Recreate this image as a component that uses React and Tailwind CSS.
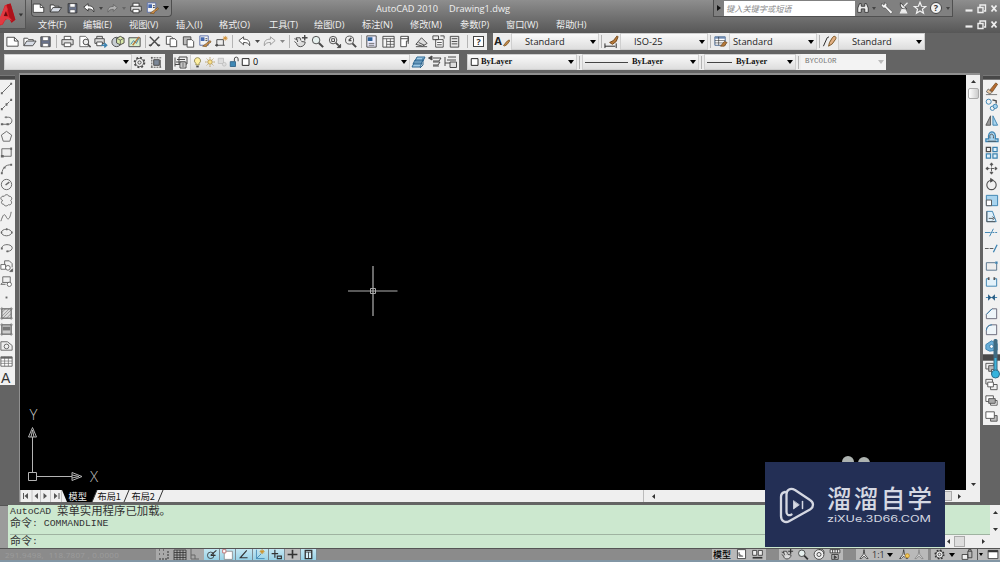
import React from 'react';

const UI = "font-['Open_Sans','Noto_Sans_CJK_SC',sans-serif]";
const MONO = "font-['Liberation_Mono','Noto_Sans_CJK_SC',monospace]";

const D = '#4a4a4a';
const B = '#3b82b0';
const L = '#a9d4ee';

// 16x16 drawings, stroke defaults to currentColor
const icons = {
    new: <><path d="M2 3.5h8l4 4v5.5H2z" fill="#fff" /><path d="M10 3.5v4h4" /></>,
    open: <><path d="M2 12.5v-8h4l1 1.5h5v2" fill="#fff" /><path d="M2 12.5l3-5h10l-3.5 5z" fill="#d8dde6" /></>,
    save: <><path d="M3 3h10v10.5H3z" fill="#69738c" /><path d="M5 3h6v4H5zM5 10h6v3.5H5z" fill="#fff" strokeWidth=".6" /></>,
    print: <><path d="M4.5 6V2.5h7V6" fill="#fff" /><path d="M2 6h12v5.5H2z" fill="#ddd" /><path d="M4.5 9.5h7v4h-7z" fill="#fff" /></>,
    preview: <><path d="M3 2.5h6l3 3v8H3z" fill="#fff" strokeWidth=".8" /><circle cx="9.5" cy="8.5" r="3" fill="#eee" /><path d="M11.5 11l3 3" strokeWidth="1.6" /></>,
    publish: <><path d="M4 5V2.5h6V5M2 5h10v5H2z" fill="#ddd" /><path d="M4 8.5h6v4H4z" fill="#fff" /><path d="M9 12h5M12 9.8l2.5 2.2-2.5 2.2" stroke={B} strokeWidth="1.6" /></>,
    globe: <><circle cx="7" cy="8.5" r="5" fill="#c7cdd2" /><path d="M7 4.5l4-2 4 2v5l-4 2-4-2z" fill="#d8e8a8" /><path d="M7 4.5l4 2 4-2M11 6.5v5" strokeWidth=".8" /></>,
    map: <><path d="M2 4h12v9.5H2z" fill="#d9eecb" /><path d="M4 11l3-4 3 3 3-6" stroke={B} /><path d="M6 12l7-9" stroke="#b97a3c" strokeWidth="1.5" /></>,
    cut: <><path d="M3 3l10 10M13 3L3 13" strokeWidth="1.5" /><path d="M2 12h3M11 12h3" strokeWidth="1.8" /></>,
    copy: <><path d="M2.5 2.5h5l2 2V11h-7z" fill="#fff" /><path d="M6.5 5h5l2 2v6.5h-7z" fill="#fff" /></>,
    paste: <><path d="M2.5 3h8v8.5h-8z" fill="#bbb" /><path d="M6.5 6h5l2 2v6h-7z" fill="#fff" /></>,
    match: <><path d="M3 2h9v10H3z" fill="#f4f4f4" stroke="#5b6ea8" /><path d="M4 3.5h4v4H4z" fill="#4468b0" stroke="none" /><path d="M9 5h2M9 7h2" /><path d="M6 13l4-3 4-3 1 1.5-4 3-1 2z" fill="#c98d4b" stroke="#76511f" strokeWidth=".7" /></>,
    block: <><path d="M3 6h7v6M3 6v6h-1.5h10" /><path d="M12 2v5M9.5 4.5h5M10 3l4 3M14 3l-4 3" stroke="#d08b2c" strokeWidth=".9" /><circle cx="3" cy="12" r="1" fill={D} /></>,
    undo: <path d="M2 7l5-4v2.5c5 0 7 2 6.5 7-1-2.5-3-3.5-6.5-3.5v2.5z" fill="#fff" />,
    redo: <path d="M14 7L9 3v2.5c-5 0-7 2-6.5 7 1-2.5 3-3.5 6.5-3.5v2.5z" fill="#eee" />,
    pan: <><path d="M1.5 5l3 1M5 8.5L3.5 4h4l1 3M4 10L1.5 8M4 10c0 2 1.5 3.5 4 3.5s5-2 5-5L9 8" fill="#ddd" /><path d="M12.5 1v6M9.5 4h6" strokeWidth="1.5" /></>,
    zoom: <><circle cx="6.5" cy="6.5" r="4" fill="#e6f0ee" /><path d="M9.5 9.5l4.5 4.5" strokeWidth="2.2" /></>,
    zoomWin: <><circle cx="6.5" cy="6.5" r="4" fill="#eee" /><path d="M5 5h3v3H5z" /><path d="M9.5 9.5l3 3" strokeWidth="1.8" /><path d="M14.5 11v3.5H11z" fill={D} /></>,
    zoomPrev: <><circle cx="7" cy="6.5" r="4.3" fill="#eee" /><path d="M10 10l4 4" strokeWidth="2" /><path d="M6 7l3-3M6 7h3" strokeWidth="1.4" /></>,
    props: <><path d="M3 2h10v12H3z" fill="#eef" /><path d="M4 3.5h5v4H4z" fill="#2f6297" stroke="none" /><path d="M5 10h6M5 12h6" strokeWidth=".8" /></>,
    design: <><path d="M2 2.5h12v11.5H2z" fill="#f5f5f5" /><path d="M2 5h12M6 5v9M6 8h8M6 11h8M10 5v9" strokeWidth=".8" /></>,
    palettes: <><path d="M4 2.5h8v5H10v6H4z" fill="#fff" /><path d="M4 5h8M12 2.5v8" /></>,
    sheet: <><path d="M2 11l6-7 6 6-5 3z" fill="#ddd" /><path d="M2 13.5h12M5 9l6 3" /></>,
    markup: <><path d="M5 6h8v8H5z" fill="#fff" /><path d="M2 2h6v4H2zM10 2h4v3M6.5 9h5M6.5 11.5h5" /></>,
    calc: <><path d="M3.5 2.5h9v11.5h-9z" fill="#e6e6e6" /><path d="M5 5h6M5 8h6M5 10.5h6" /></>,
    layers: <><path d="M6 3h8v7H6z" fill="#eee" /><path d="M4 5.5h8M3 8h9M2 10.5h6M2 3.5v9" /><path d="M7 8h6v6H7z" fill="#eee" /><path d="M8.5 10h3M8.5 12h3" /></>,
    bulb: <><path d="M8 2a3.8 3.8 0 0 1 2 7v2H6V9a3.8 3.8 0 0 1 2-7z" fill="#fff0a0" stroke="#867c43" /><path d="M6.5 13h3" strokeWidth="2" /></>,
    sun: <><circle cx="8" cy="8" r="3" fill="#fbe38c" stroke="#a6863c" /><path d="M8 1.5v2M8 12.5v2M1.5 8h2M12.5 8h2M3.5 3.5l1.3 1.3M11.2 11.2l1.3 1.3M12.5 3.5l-1.3 1.3M3.5 12.5l1.3-1.3" stroke="#a6863c" /></>,
    frozen: <g stroke="#bbb"><path d="M3 3h7v7H3z" fill="#ddd" /><circle cx="11" cy="11" r="2.5" fill="#ddd" /></g>,
    lock: <><path d="M3 7.5h7V14H3z" fill="#3f88b5" stroke="#23577c" /><path d="M8.5 7V4a2.5 2.5 0 0 1 5 0v3" strokeWidth="1.3" /></>,
    square: <path d="M3 3.5h9v9H3z" fill="#fff" stroke="#222" strokeWidth="1.3" />,
    stack: <><path d="M2 13l2-4h8l-2 4zM3 10l2-4h8l-2 4zM5 7l2-4h8l-2 4z" fill="#9fcbe8" stroke="#2e6790" /><path d="M13 4v7l-3 3" stroke="#2e6790" /></>,
    layerPrev: <><path d="M6 4h8l-2 3H6M6 8h7l-2 3H6M6 12h6" /><path d="M1.5 4L5 2v4z" fill={D} /></>,
    layerState: <><path d="M5 3h8M4 6h9M2 9h5M2 3v9" /><path d="M7 8h6.5v5.5H7z" fill="#ddd" /></>,
    gear: <><circle cx="8" cy="8" r="5.2" strokeDasharray="2 2.08" strokeWidth="2" /><circle cx="8" cy="8" r="4.4" fill="#eee" /><circle cx="8" cy="8" r="1.7" /></>,
    workspace: <><path d="M2 3h12M2 13h12M3 2v12" strokeDasharray="2 1" /><path d="M5 5h6v6H5z" fill="#7b8798" /><path d="M12 5v8" /></>,
    textStyle: <path d="M8 13l4-5 3-2 .5 1.5-3 4-3 2z" fill="#c98d4b" stroke="#76511f" />,
    dimStyle: <><path d="M1 13h11M1 10v5M13 10v5" /><path d="M6 9l4-2 4-5 1 1-2 5-4 3z" fill="#b77a3a" stroke="#704416" /></>,
    tableStyle: <><path d="M2 3h11v9H2z" fill="#fff" stroke="#49668f" /><path d="M2 4h11" strokeWidth="2" stroke="#6f8cb4" /><path d="M2 7h11M6 3v9M2 9.5h11" strokeWidth=".6" /><path d="M8 13l4-5 3 1-3 4z" fill="#b77a3a" stroke="#704416" strokeWidth=".7" /></>,
    leader: <><path d="M1.5 13l4-9 2-1" /><path d="M7 13l1-4 3-5c2-3 5-1 3.5 1.5l-3.5 5z" fill="#e2b083" stroke="#76511f" /></>,
    // draw toolbar
    line: <><path d="M3 13L13 3" /><path d="M2 13h2M12 3h2" strokeWidth="2.2" /></>,
    xline: <><path d="M3 13L13 3" strokeDasharray="5 1" /><path d="M2 13h2M7 8h2M12 3h2" strokeWidth="2.5" /></>,
    pline: <><path d="M6 4.5h4c5 0 5 7.5 0 7.5H3" /><path d="M2 12h2.5M8 12h2.5M7 4.5h1" strokeWidth="2" /></>,
    polygon: <path d="M8 2.5l5.5 4-2 6.5h-7l-2-6.5z" />,
    rect: <><path d="M3 4h10v8H3z" fill="#eee" /><path d="M2 12h3M12 4h2" strokeWidth="2.5" /></>,
    arc: <><path d="M3 13c1-6 4-9 10-9" /><path d="M2 13h2M5 7h2M12 4h2" strokeWidth="2" /></>,
    circle: <><circle cx="8" cy="8" r="5.5" /><path d="M7 8.5l4-3" strokeWidth="1.5" /></>,
    cloud: <path d="M4 8c-3.5-1-2-5.5 1.5-4.5C7 1 10 1.5 10.5 3.5c3-.5 4 3 2 4.5 2 2 .5 5.5-2.5 4.5-1.5 2-4.5 1.5-5-.5C2 12 2 9 4 8z" />,
    spline: <path d="M2 13c3-9 4-8 6-4s4 0 5-6" />,
    ellipse: <><ellipse cx="8" cy="8" rx="5.5" ry="3.5" /><path d="M7.5 4.5h1.5M2 8h1.5M13 8h1.5" strokeWidth="2.2" /></>,
    ellArc: <><path d="M3 8c0-6 12-5 11 0-1 3-4 3-6 3" /><path d="M2 8h2M8 11h2" strokeWidth="2" /></>,
    insert: <><path d="M6 9V3h5l3 3v4" /><path d="M2 7h5v5H2z" fill="#fff" /><circle cx="9.5" cy="10.5" r="2.5" fill="#fff" /><path d="M14.5 11.5v3h-3z" fill={D} /></>,
    makeBlock: <><path d="M4 3h8v6H4z" /><circle cx="11" cy="11" r="2.3" fill="#fff" /><path d="M4 9l-2 2h5" /></>,
    point: <path d="M7 8h2" strokeWidth="2" />,
    hatch: <><path d="M3 3h10v10H3z" fill="#ddd" /><path d="M3 7l4-4M3 11l8-8M4 13l9-9M8 13l5-5M1 3h14M1 13h14M3 1v14M13 1v14" strokeWidth=".6" /></>,
    gradient: <><path d="M3 3h10v10H3z" fill="#ccc" /><path d="M4 5h8v4H4z" fill="#777" stroke="none" /><path d="M1 3h14M1 13h14M3 1v14M13 1v14" strokeWidth=".6" /></>,
    region: <><path d="M2 13V4h7l5 4v5z" fill="#eee" /><circle cx="8" cy="9" r="2.5" /></>,
    table: <><path d="M2 3h12v10H2z" fill="#fff" /><path d="M2 4h12" strokeWidth="2" /><path d="M2 7.5h12M2 10h12M6 3v10M10 3v10" strokeWidth=".7" /></>,
    // modify toolbar
    erase: <><path d="M6 10l6.5-8 2 1.500-5.500 8z" fill="#b56a2f" stroke="#704416" strokeWidth=".8" /><path d="M4.500 8.500l4 3.500-2 2-4-2.500z" fill="#e9c9a5" strokeWidth=".8" /><path d="M2 14.500h12" strokeWidth=".8" /></>,
    dup: <g stroke={B}><circle cx="5" cy="5" r="2.7" /><circle cx="9" cy="12" r="2.3" /><circle cx="12" cy="10" r="2.3" fill={L} /><path d="M9 3l4 1v3" stroke={D} strokeWidth="1.4" /></g>,
    mirror: <><path d="M7 3v10H2z" fill="#999" /><path d="M9.5 3v10h5z" fill={L} stroke={B} /></>,
    offset: <><path d="M2 13.5h13v-3h-3c2-10-9-10-7 0H2z" fill={L} stroke={B} strokeWidth="1.3" /><path d="M4 13h9M6.5 10c-2-6 5-6 3.5 0" /></>,
    array: <g stroke={B} strokeWidth="1.3"><path d="M2.5 2.5h4.5V7H2.5z" stroke={D} /><path d="M9.5 2.5H14V7H9.5zM2.5 9.5h4.5V14H2.5zM9.5 9.5H14V14H9.5z" fill="#dff0fa" /></g>,
    move: <><path d="M8 2v12M2 8h12" strokeDasharray="4 1" /><path d="M6.5 4L8 2l1.5 2zM6.5 12L8 14l1.5-2zM4 6.5L2 8l2 1.5zM12 6.5L14 8l-2 1.5z" fill={D} /></>,
    rotate: <><circle cx="8" cy="8.5" r="5" strokeWidth="1.2" /><path d="M7 1.5l3 2-3 2z" fill={D} /></>,
    scale: <><path d="M2.5 2.5h12v11h-12z" fill={L} stroke={B} /><path d="M2.5 7.5H8v6H2.5z" fill="#fff" /></>,
    stretch: <><path d="M3 2.5h6l4 11H3z" fill="#dff0fa" stroke={B} /><path d="M3 2.5v11h9M5 10h5M9 8l2 2-2 2" /></>,
    trim: <><path d="M1 8h6" stroke={B} /><path d="M9 8h6" stroke={B} strokeDasharray="2 1" /><path d="M6 12l4-8" stroke={B} /></>,
    extend: <><path d="M1 8h9" strokeDasharray="4 1" /><path d="M10 12l4-8" stroke={B} strokeWidth="1.3" /></>,
    breakPt: <><path d="M12 5H2.5v8h11V6" stroke="#55718a" fill="#eee" /><path d="M12 5h2.5" strokeWidth="2.5" stroke={B} /></>,
    break: <><path d="M5 5H2.5v8h11V5H11" stroke={B} fill="#e3f2fb" /><path d="M5 3.5v3M11 3.5v3" strokeWidth="1.8" /></>,
    join: <><path d="M2 8h12" stroke={B} /><path d="M5 6l2 2-2 2zM11 6L9 8l2 2z" strokeWidth="1.3" stroke="#2c5f85" fill="#2c5f85" /></>,
    chamfer: <><path d="M2.5 13.5V9l6-6h5v10.5z" fill="#eef5f9" stroke="#667" /><path d="M2.5 9l6-6" stroke={B} /></>,
    fillet: <><path d="M2.5 13.5V9c0-4 3-6 6-6h5v10.5z" fill="#eef5f9" stroke="#667" /><path d="M2.5 9c0-4 3-6 6-6" stroke={B} /></>,
    explode: <><path d="M2 7l6-4 6 3v7l-8 1-4-2z" fill="#68aed8" stroke={B} /><circle cx="8" cy="9" r="2" fill="#fff" stroke={B} /></>,
    order1: <><path d="M2 2.5h8v6H2z" fill="#eee" /><path d="M5 5h7v6H5z" fill="#bbb" /><path d="M8 9h6v5H8z" fill="#fff" /></>,
    order2: <><path d="M2 2.5h7v5H2z" fill="#eee" /><path d="M7 8h7v5.5H7z" fill="#eee" /><path d="M4 5.5h6v5H4z" fill="#fff" /></>,
    order3: <><path d="M2 3h8v6H2z" fill="#fff" /><path d="M7 8h7v5H7z" fill="#fff" /><path d="M5 6h7v5H5z" fill="#aaa" /></>,
    order4: <><path d="M7 7h7v6H7z" fill="#bbb" /><path d="M2 3h9v7H2z" fill="#fff" /></>,
    // title bar
    binoc: <path d="M2 13V8l2-5h2v3h4V3h2l2 5v5h-4V9H6v4z" fill="#eee" stroke="#333" />,
    wrench: <path d="M2 2.5l2 2 1.5-1L5 1.5l3 2-.5 2.5 7 6.5-2 2.5-6.5-7H3.500l-2-3z" fill="#f4f4f4" stroke="#444" strokeWidth=".7" />,
    dish: <><path d="M4 2c-1 5 2 8 7 7z" fill="#eee" stroke="#333" /><path d="M8 6l4-4M6 9l-2 4.5h7l-2-4" stroke="#eee" fill="#eee" strokeWidth="1.3" /></>,
    star: <path d="M8 1.5l1.8 4.5 4.7.3-3.7 3 1.2 4.7L8 11.5 4 14l1.2-4.7-3.7-3 4.7-.3z" fill="#777" stroke="#f4f4f4" strokeWidth="1.4" />,
    // status bar
    snap: <path d="M3 3h1M7 3h1M3 7h1M7 7h1M3 12h9V3" strokeDasharray="2 1" />,
    grid: <path d="M2 3h12v10H2zM2 5.5h12M2 8h12M2 10.5h12M5 3v10M8 3v10M11 3v10" strokeWidth=".8" />,
    ortho: <path d="M3 2v10h8M3 8h4v4" stroke="#666" />,
    polar: <><circle cx="7" cy="9" r="4" /><path d="M7 9l7-6M7 9h6" strokeWidth="1.4" /></>,
    osnap: <><path d="M4 4h10v10H4z" fill="#fff" stroke="#888" /><path d="M2 2h4v4H2z" fill="#fff" stroke="#b66" /></>,
    otrack: <path d="M12 3L4 12h9" strokeWidth="1.4" />,
    ducs: <><path d="M3 2v11h10M3 13l6-6" stroke={B} /><path d="M10 1.5v6M7 4.5h6M8 2.5l4 4M12 2.5l-4 4" stroke="#cf9327" strokeWidth="1.2" /></>,
    dyn: <path d="M6 2v10M2 7h8M9 10h5v3H9z" strokeWidth="1.4" />,
    lwt: <path d="M2 8h6M8 2v11M8 8h6" strokeWidth="2" />,
    qp: <><path d="M4 3h8v10H4z" fill="#d5eef8" strokeWidth="1.6" /><path d="M8 5v8M4 5h8" /></>,
    paper: <><path d="M3 2h10v11H3z" fill="#fff" /><path d="M5 5v5h5M5 7l3 3" /></>,
    views: <><path d="M2 3h5v6H2zM9 3h5v6H9z" fill="#eee" /><path d="M2 12h12" strokeWidth="2" /></>,
    wheel: <><circle cx="8" cy="8" r="6" fill="#eee" /><circle cx="8" cy="8" r="2.5" /><path d="M8 2c4-2 7 1 6 5" /></>,
    motion: <><path d="M2 2h12v4H2z" fill="#eee" /><path d="M5 2v4M8 2v4M11 2v4M4 8h8v6H4z" /><path d="M7 9.5l3 2-3 1.5z" fill={D} /></>,
    anno: <path d="M8 2L7 8l-4 5h2l3-3 3 3h2L9 8z" fill="#eee" />,
    annoSun: <><path d="M7 2L6 8l-4 5h2l3-3 3 3h2L8 8z" fill="#eee" /><circle cx="11.5" cy="9.5" r="2.5" fill="#f1ca5a" stroke="#bb8523" /></>,
    toolLock: <><path d="M2 8h7v6H2z" fill="#eee" /><path d="M9 4h5v8H9zM10 4V2h3v2" /></>,
    clean: <><path d="M2 3h12v10H2z" fill="#fff" /><path d="M2 4h12" strokeWidth="2.5" /></>,
};

function Icon({ name, className = 'size-[15px]' }) {
    return (
        <svg viewBox="0 0 16 16" className={`shrink-0 ${className}`} fill="none" stroke="currentColor" strokeWidth="1">
            {icons[name]}
        </svg>
    );
}

function Caret({ className = 'h-[4px] w-[6px] text-black' }) {
    return (
        <svg viewBox="0 0 8 5" preserveAspectRatio="none" className={`shrink-0 ${className}`}>
            <path d="M0 0h8L4 5z" fill="currentColor" />
        </svg>
    );
}

// Row of toolbar buttons on the 16.7px grid
function Group({ names, className = '' }) {
    return (
        <div className={`flex h-full shrink-0 items-center ${className}`}>
            {names.map(n => (
                <div key={n} className="flex w-[16.7px] shrink-0 justify-center">
                    <Icon name={n} />
                </div>
            ))}
        </div>
    );
}

const Sep = ({ className = '' }) => <div className={`h-[13px] w-px shrink-0 bg-[#b4b4b4] ${className}`} />;

function Combo({ children, className = '' }) {
    return (
        <div className={`flex h-full shrink-0 items-center border border-[#cfcfcf] bg-linear-to-b from-[#fafafa] to-[#dedede] pr-[2px] ${className}`}>
            {children}
        </div>
    );
}

const menus = [
    ['文件(F)', 'w-[45px]'],
    ['编辑(E)', 'w-[46px]'],
    ['视图(V)', 'w-[47px]'],
    ['插入(I)', 'w-[43px]'],
    ['格式(O)', 'w-[50px]'],
    ['工具(T)', 'w-[45px]'],
    ['绘图(D)', 'w-[48px]'],
    ['标注(N)', 'w-[48px]'],
    ['修改(M)', 'w-[50px]'],
    ['参数(P)', 'w-[46px]'],
    ['窗口(W)', 'w-[50px]'],
    ['帮助(H)', 'w-[40px]'],
];

function WindowButtons() {
    return (
        <svg viewBox="0 0 34 12" className="h-[12px] w-[34px] shrink-0" fill="none" stroke="#eee" strokeWidth="1.6">
            <path d="M1.5 7.5h7" strokeWidth="2.2" />
            <path d="M14 4.5h5v5H14zM16 4V2h5.5v6H20" strokeWidth="1.4" />
            <path d="M27.5 2.5l5 6M32.5 2.5l-5 6" strokeWidth="1.8" />
        </svg>
    );
}

function Header() {
    return (
        <header className="flex h-[33px] shrink-0 bg-linear-to-b from-[#8e8e8e] to-[#575757] text-[#f0f0f0]">
            <div className="flex h-[29px] w-[26px] shrink-0 items-center border-r border-b border-[#555] bg-linear-to-b from-[#8c8c8c] to-[#767676]">
                <svg viewBox="0 0 26 29" className="h-[29px] w-[26px]">
                    <path d="M0 19L5 5l6-2 5 17-4 3-3-5-4 3-2 4-3 1z" fill="#d92127" />
                    <path d="M7 4l4-1 5 17-4 3-2-4z" fill="#ac121b" />
                    <path d="M0 17L6 5l2 4-4 7 6 2 3 3-7-2-4 6H0z" fill="#e03a42" />
                    <path d="M4 16l2-5 2 5z" fill="#6d0a10" />
                    <path d="M19.5 13.5h4.5l-2.25 3z" fill="#333" />
                </svg>
            </div>
            <div className="flex min-w-0 grow flex-col">
                <div className="flex h-[17px] items-center">
                    <div className="ml-[5px] flex h-[17px] w-[141px] shrink-0 items-center rounded-b-sm border border-t-0 border-[#4e4e4e] bg-[#858585] text-[#333]">
                        <Icon name="new" className="-ml-[2px] h-[14px] w-[17px]" />
                        <Icon name="open" className="h-[14px] w-[17px]" />
                        <Icon name="save" className="h-[14px] w-[17px]" />
                        <Icon name="undo" className="h-[14px] w-[16px]" />
                        <Caret className="mx-[2px] h-[3px] w-[4px] text-[#444]" />
                        <Icon name="redo" className="h-[13px] w-[15px] opacity-40" />
                        <Caret className="mx-[2px] h-[3px] w-[4px] text-[#666]" />
                        <Icon name="print" className="h-[14px] w-[16px]" />
                        <Icon name="match" className="h-[15px] w-[16px]" />
                        <Caret className="ml-[3px] h-[4px] w-[6px] text-black" />
                    </div>
                    <div className={`ml-[204px] w-[337px] shrink-0 text-[9.2px] whitespace-pre ${UI}`}>
                        <span className="inline-block w-[73px]">AutoCAD 2010</span>
                        <span>Drawing1.dwg</span>
                    </div>
                    <div className="flex h-[17px] w-[240px] shrink-0 items-center border border-t-0 border-[#505050] bg-[#808080]">
                        <svg viewBox="0 0 10 14" className="h-[14px] w-[10px]"><path d="M3 4l4 3-4 3z" fill="#111" /></svg>
                        <div className="flex h-[15px] w-[131px] shrink-0 items-center bg-white pl-[2px] text-[8.2px] text-[#888] italic font-['Noto_Sans_CJK_SC',sans-serif]">键入关键字或短语</div>
                        <Icon name="binoc" className="ml-px size-[14px]" />
                        <Caret className="ml-[2px] h-[3px] w-[4px] text-[#444]" />
                        <Icon name="wrench" className="ml-[4px] size-[14px]" />
                        <Icon name="dish" className="ml-[3px] size-[14px]" />
                        <Icon name="star" className="ml-[2px] size-[14px]" />
                        <div className={`ml-[3px] flex size-[12px] items-center justify-center rounded-full border border-[#444] bg-[#f2f2f2] text-[9px] font-bold text-[#333] ${UI}`}>?</div>
                        <Caret className="ml-[4px] h-[3px] w-[4px] text-[#444]" />
                    </div>
                    <div className="ml-auto pr-[2px]"><WindowButtons /></div>
                </div>
                <div className={`flex h-[16px] items-center pl-[12px] text-[9.2px] leading-none ${UI}`}>
                    {menus.map(([label, width]) => (
                        <span key={label} className={`shrink-0 whitespace-nowrap ${width}`}>{label}</span>
                    ))}
                    <div className="ml-auto pr-[2px]"><WindowButtons /></div>
                </div>
            </div>
        </header>
    );
}

function StandardToolbar() {
    return (
        <div className={`flex h-[17px] shrink-0 pl-[4px] text-[9.3px] text-[#222] ${UI}`}>
            <div className="flex h-full w-[483px] shrink-0 items-center bg-[#ededed] text-[#4a4a4a]">
                <Group names={['new', 'open', 'save']} />
                <Sep className="ml-[2px]" />
                <Group names={['print', 'preview', 'publish', 'globe', 'map']} className="ml-[2px]" />
                <Sep className="ml-[2px]" />
                <Group names={['cut', 'copy', 'paste', 'match', 'block']} className="ml-px" />
                <Sep className="ml-[2px]" />
                <Group names={['undo']} className="ml-[3px]" />
                <Caret className="mx-[2px] h-[3px] w-[5px]" />
                <Group names={['redo']} className="opacity-50" />
                <Caret className="mx-[2px] h-[3px] w-[5px] text-[#888]" />
                <Sep className="ml-[2px]" />
                <Group names={['pan', 'zoom', 'zoomWin', 'zoomPrev']} className="ml-[2px]" />
                <Sep className="ml-[2px]" />
                <Group names={['props', 'design', 'palettes', 'sheet', 'markup', 'calc']} className="ml-px" />
                <Sep className="ml-[4px]" />
                <div className="ml-[5px] flex size-[11px] items-center justify-center border border-[#444] bg-white text-[9px] leading-none font-bold text-[#333]">?</div>
            </div>
            <div className="ml-[6px] flex h-full w-[432px] shrink-0 items-center bg-[#ededed]">
                <div className="flex w-[18px] items-center justify-center">
                    <span className="text-[11px] font-bold">A</span>
                    <Icon name="textStyle" className="-ml-[5px] size-[13px]" />
                </div>
                <Combo className="w-[88px] pl-[13px]"><span className="grow">Standard</span><Caret /></Combo>
                <div className="flex w-[21px] items-center justify-center gap-[2px]"><Sep /><Icon name="dimStyle" /></div>
                <Combo className="w-[88px] pl-[13px]"><span className="grow">ISO-25</span><Caret /></Combo>
                <div className="flex w-[21px] items-center justify-center gap-[2px]"><Sep /><Icon name="tableStyle" /></div>
                <Combo className="w-[88px] pl-[3px]"><span className="grow">Standard</span><Caret /></Combo>
                <div className="flex w-[21px] items-center justify-center gap-[2px]"><Sep /><Icon name="leader" /></div>
                <Combo className="w-[87px] pl-[13px]"><span className="grow">Standard</span><Caret /></Combo>
            </div>
        </div>
    );
}

const serif = "font-['Liberation_Serif',serif] text-[8.4px] font-bold text-[#111]";

function LayerToolbar() {
    return (
        <div className="mt-[4px] flex h-[16px] shrink-0 pl-[4px] text-[#4a4a4a]">
            <div className="flex h-full w-[161px] shrink-0 items-center bg-[#ededed]">
                <Combo className="w-[128px] justify-end"><Caret /></Combo>
                <Icon name="gear" />
                <Icon name="workspace" className="ml-[2px] size-[15px]" />
            </div>
            <div className="ml-[8px] flex h-full w-[286px] shrink-0 items-center bg-[#ededed]">
                <Icon name="layers" className="size-[16px]" />
                <Combo className="ml-px w-[220px]">
                    <Icon name="bulb" className="size-[13px]" />
                    <Icon name="sun" className="size-[12px]" />
                    <Icon name="frozen" className="size-[12px]" />
                    <Icon name="lock" className="size-[12px]" />
                    <Icon name="square" className="size-[12px]" />
                    <span className={`grow pl-px text-[9px] text-black ${UI}`}>0</span>
                    <Caret />
                </Combo>
                <Icon name="stack" className="size-[16px]" />
                <Icon name="layerPrev" className="ml-px size-[16px]" />
                <Icon name="layerState" className="size-[16px]" />
            </div>
            <div className="ml-[8px] flex h-full w-[419px] shrink-0 items-center bg-[#ededed]">
                <Combo className="w-[110px] pl-px">
                    <Icon name="square" className="size-[12px]" />
                    <span className={`grow ${serif}`}>ByLayer</span>
                    <Caret />
                </Combo>
                <Sep className="mx-[2px]" />
                <Combo className="w-[117px] pl-[2px]">
                    <div className="h-px w-[43px] bg-[#444]" />
                    <span className={`grow pl-[4px] ${serif}`}>ByLayer</span>
                    <Caret />
                </Combo>
                <Sep className="mx-[2px]" />
                <Combo className="w-[92px] pl-[2px]">
                    <div className="h-px w-[25px] bg-[#444]" />
                    <span className={`grow pl-[4px] ${serif}`}>ByLayer</span>
                    <Caret />
                </Combo>
                <Sep className="mx-[2px]" />
                <div className="flex h-full w-[85px] items-center bg-[#f3f3f3] pr-[2px] pl-[4px]">
                    <span className="grow text-[7.5px] text-[#777] font-['Liberation_Mono',monospace]">BYCOLOR</span>
                    <Caret className="h-[4px] w-[6px] text-[#bbb]" />
                </div>
            </div>
        </div>
    );
}

const drawTools = ['line', 'xline', 'pline', 'polygon', 'rect', 'arc', 'circle', 'cloud', 'spline', 'ellipse', 'ellArc', 'insert', 'makeBlock', 'point', 'hatch', 'gradient', 'region', 'table'];
const modifyTools = ['erase', 'dup', 'mirror', 'offset', 'array', 'move', 'rotate', 'scale', 'stretch', 'trim', 'extend', 'breakPt', 'break', 'join', 'chamfer', 'fillet', 'explode'];
const orderTools = ['order1', 'order2', 'order3', 'order4'];

function SideTools({ names }) {
    return names.map(n => (
        <div key={n} className="flex h-[16.1px] w-full shrink-0 items-center justify-center">
            <Icon name={n} />
        </div>
    ));
}

const Grip = ({ className = 'h-[5px]' }) => <div className={`shrink-0 border-y border-[#777] bg-[#484848] ${className}`} />;

function Canvas() {
    return (
        <div className="flex h-[415px]">
            <svg viewBox="20 75 946 415" className="h-[415px] w-[946px] shrink-0 bg-black" fill="none" stroke="#b4b4b4" strokeWidth="1">
                <path d="M348 291h49.5M373 266v50" stroke="#b0b0b0" strokeWidth="1.2" />
                <path d="M370.5 288.5h5v5h-5z" stroke="#aaa" />
                <path d="M28.5 472.5h8v8h-8zM32.5 472v-35M36.5 476.5H72" />
                <path d="M28.5 437l4-9.5 4 9.5zM31 437l1.5-7 1.5 7M72 472.5l10 4-10 4zM72 475l7 1.5-7 1.5" />
                <circle cx="848" cy="462" r="6" fill="#adb3b0" stroke="none" />
                <circle cx="864" cy="463" r="6" fill="#adb3b0" stroke="none" />
                <g fill="#c0c0c0" stroke="none" fontFamily="Open Sans, sans-serif" fontWeight="300" fontSize="15">
                    <text x="29.5" y="420">Y</text>
                    <text x="90" y="482">X</text>
                </g>
            </svg>
            <div className="flex w-[14px] flex-col items-center justify-between bg-[#efefef] pt-[5px] pb-[4px]">
                <div className="flex flex-col items-center gap-[5px]">
                    <Caret className="h-[3px] w-[5px] rotate-180 text-[#333]" />
                    <div className="h-[11px] w-[11px] rounded-xs border border-[#aaa] bg-linear-to-r from-white to-[#ccc]" />
                </div>
                <Caret className="h-[3px] w-[5px] text-[#333]" />
            </div>
        </div>
    );
}

function LayoutTabs() {
    return (
        <div className="flex h-[12px] bg-[#efefef]">
            <svg viewBox="0 0 146 12" className="h-[12px] w-[146px] shrink-0" fill="none" stroke="#999">
                <path d="M.5 0v12M12 0v12M20.5 0v12M30.5 0v12M41.5 0v12" stroke="#c4c4c4" />
                <path d="M3.5 3v6M39 3v6" stroke="#555" />
                <path d="M8 3v6L4.5 6zM18 3v6l-3.5-3zM23.5 3v6l3.5-3zM34 3v6l3.5-3z" fill="#555" stroke="none" />
                <path d="M42 0h35l-5 12H47z" fill="#000" stroke="none" />
                <path d="M77 0l-5 12M109 0l-5 12M143 0l-5 12" stroke="#333" />
                <g fontFamily="Noto Sans CJK SC, sans-serif" fontSize="9.2" stroke="none" fill="#111">
                    <text x="48.5" y="9.5" fill="#eee">模型</text>
                    <text x="77.5" y="9.5">布局1</text>
                    <text x="111.5" y="9.5">布局2</text>
                </g>
            </svg>
            <div className="ml-[477px] flex grow items-center border-l border-[#bbb] pl-[7px]">
                <Caret className="h-[3px] w-[5px] rotate-90 text-[#333]" />
                <div className="ml-[274px] h-[10px] w-[22px] border border-[#aaa] bg-[#ddd]" />
                <Caret className="ml-[5px] h-[3px] w-[5px] -rotate-90 text-[#333]" />
            </div>
        </div>
    );
}

function CommandLine() {
    return (
        <div className="mt-[3px] flex h-[43px] shrink-0 text-[#333]">
            <div className="w-[8px] shrink-0 border-t border-[#555] bg-[#9b9b9b]" />
            <div className={`flex w-[982px] shrink-0 flex-col bg-[#cce8cf] pt-px pl-[2px] text-[9.8px] ${MONO}`}>
                <div className="flex h-[12px] items-center whitespace-pre">AutoCAD <span className="pt-px text-[11.4px] leading-none">菜单实用程序已加载。</span></div>
                <div className="flex h-[12px] items-center whitespace-pre"><span className="text-[11px] leading-none">命令</span>: COMMANDLINE</div>
                <div className="mt-[4px] flex h-[14px] items-center border-t border-[#9fb3a1]">
                    <div className="flex grow items-center pt-[2px]"><span className="text-[11px] leading-none">命令</span>:</div>
                    <div className="flex h-full w-[45px] items-center bg-[#efefef] pl-px">
                        <Caret className="h-[3px] w-[5px] rotate-90 text-[#333]" />
                        <div className="ml-[3px] h-[11px] w-[11px] border border-[#aaa] bg-[#ddd]" />
                        <Caret className="ml-[16px] h-[3px] w-[5px] -rotate-90 text-[#333]" />
                    </div>
                </div>
            </div>
            <div className="flex grow flex-col items-center justify-between bg-[#efefef] pt-[6px] pb-[17px]">
                <Caret className="h-[3px] w-[5px] rotate-180 text-[#333]" />
                <Caret className="h-[3px] w-[5px] text-[#333]" />
            </div>
        </div>
    );
}

const toggles = ['polar', 'osnap', 'otrack', 'ducs', 'dyn', 'lwt', 'qp'];

function StatusBar() {
    return (
        <div className="flex h-[14px] shrink-0 items-center overflow-hidden border-t border-b-2 border-t-[#555] border-b-[#8296a5] bg-[#8b8b8b] text-[#333]">
            <div className={`w-[156px] shrink-0 pl-[5px] text-[8px] tracking-[0.3px] whitespace-pre text-[#9c9c9c] ${UI}`}>291.9498,  118.7807 , 0.0000</div>
            <div className="flex w-[48px] shrink-0 bg-[#a9a9a9]">
                <Icon name="snap" className="size-[16px]" />
                <Icon name="grid" className="size-[16px]" />
                <Icon name="ortho" className="size-[16px]" />
            </div>
            <div className="flex shrink-0">
                {toggles.map(n => (
                    <div key={n} className={`w-[16.2px] border-r border-[#7d8b92] ${n === 'lwt' ? 'bg-[#bdbdbd]' : 'bg-linear-to-b from-[#c9e9f3] to-[#92d0e6]'}`}>
                        <Icon name={n} className="h-[13px] w-[15px]" />
                    </div>
                ))}
            </div>
            <div className="ml-auto flex h-full items-center">
                <div className="flex h-full w-[54px] items-center bg-[#b9b9b9] pl-px">
                    <span className="w-[21px] text-[9px] leading-none font-['Noto_Sans_CJK_SC',sans-serif] font-medium text-black">模型</span>
                    <Icon name="paper" className="h-[13px] w-[15px]" />
                    <Icon name="views" className="ml-px h-[13px] w-[15px]" />
                </div>
                <div className="ml-[13px] flex h-full w-[64px] items-center bg-[#b9b9b9]">
                    <Icon name="pan" className="h-[13px] w-[16px]" />
                    <Icon name="zoom" className="h-[13px] w-[16px]" />
                    <Icon name="wheel" className="h-[13px] w-[16px]" />
                    <Icon name="motion" className="h-[13px] w-[16px]" />
                </div>
                <div className="ml-[13px] flex h-full w-[72px] items-center bg-[#b9b9b9]">
                    <Icon name="anno" className="h-[13px] w-[16px]" />
                    <span className={`w-[15px] text-[9px] leading-none ${UI}`}>1:1</span>
                    <Caret />
                    <Icon name="annoSun" className="ml-[4px] h-[13px] w-[15px]" />
                    <Icon name="anno" className="h-[13px] w-[14px] opacity-40" />
                </div>
                <div className="ml-[3px] flex h-full w-[69px] items-center bg-[#b9b9b9]">
                    <Icon name="gear" className="h-[13px] w-[17px]" />
                    <Caret className="ml-px h-[4px] w-[6px] text-black" />
                    <Icon name="toolLock" className="ml-[5px] h-[13px] w-[14px]" />
                    <div className="ml-[3px] h-full w-px bg-[#555]" />
                    <Caret className="ml-px h-[3px] w-[4px] text-black" />
                    <Icon name="clean" className="ml-[3px] h-[13px] w-[14px]" />
                </div>
            </div>
        </div>
    );
}

function Watermark() {
    return (
        <div className="absolute top-[462px] left-[765px] flex h-[85px] w-[180px] items-center bg-[#232f55] pl-[14px] text-[#d5d8e2]">
            <svg viewBox="0 0 36 38" className="h-[38px] w-[36px] shrink-0" fill="none" stroke="currentColor" strokeWidth="2.3" strokeLinejoin="round" strokeLinecap="round">
                <path d="M6 6c-2.5.5-4 2-4 5v19c0 5 4 7.5 8.5 5l20.5-11.5c4-2.5 4-7 0-9.5L16 4C11.5 1.5 7.5 3.5 7.5 8.5v17.5c0 3 2.5 4 5 2.500" />
                <path d="M14.5 15v8l5.5-4z" fill="currentColor" strokeWidth=".8" />
                <path d="M23.5 15.5v7" strokeWidth="1.5" />
            </svg>
            <svg viewBox="0 0 106 42" className="ml-[12px] h-[42px] w-[106px] shrink-0" fill="currentColor">
                <text x="0" y="24" textLength="105" fontFamily="Noto Sans CJK SC, sans-serif" fontWeight="500" fontSize="24.500">溜溜自学</text>
                <text x="0" y="38" textLength="104" lengthAdjust="spacingAndGlyphs" fontFamily="Inter, sans-serif" fontSize="9">ziXUe.3D66.COM</text>
            </svg>
        </div>
    );
}

export default function App() {
    return (
        <div className="relative flex h-[562px] w-[1000px] flex-col overflow-hidden bg-[#646464]">
            <Header />
            <StandardToolbar />
            <LayerToolbar />
            <div className="mt-[3px] flex h-[429px] shrink-0">
                <div className="flex w-[15px] shrink-0 flex-col items-center pt-[2px] text-[#666]">
                    <div className="w-full"><Grip /></div>
                    <div className="flex h-[305px] w-full flex-col bg-[#f1f1f1] pr-[3px]">
                        <SideTools names={drawTools} />
                        <div className="pl-px text-[14px] leading-[16px] text-[#333] font-['Liberation_Sans',sans-serif]">A</div>
                    </div>
                </div>
                <div className="ml-[4px] w-[961px] shrink-0 border-t-2 border-l border-[#909090]">
                    <Canvas />
                    <LayoutTabs />
                </div>
                <div className="ml-[3px] flex w-[17px] shrink-0 flex-col pt-[2px] text-[#555]">
                    <Grip />
                    <div className="bg-[#f1f1f1]"><SideTools names={modifyTools} /></div>
                    <Grip className="h-[7px]" />
                    <div className="bg-[#f1f1f1]"><SideTools names={orderTools} /></div>
                </div>
            </div>
            <CommandLine />
            <StatusBar />
            <svg viewBox="0 0 10 42" className="absolute top-[338px] left-[990px] h-[42px] w-[10px]">
                <path d="M3.5 2.5c0-2 4-2 4 0V32h-4z" fill="#3e6b82" />
                <path d="M4.5 20h2v14h-2z" fill="#3db4dc" />
                <circle cx="5.5" cy="36" r="4" fill="#35b3dd" stroke="#2f6e8c" />
            </svg>
            <Watermark />
        </div>
    );
}
